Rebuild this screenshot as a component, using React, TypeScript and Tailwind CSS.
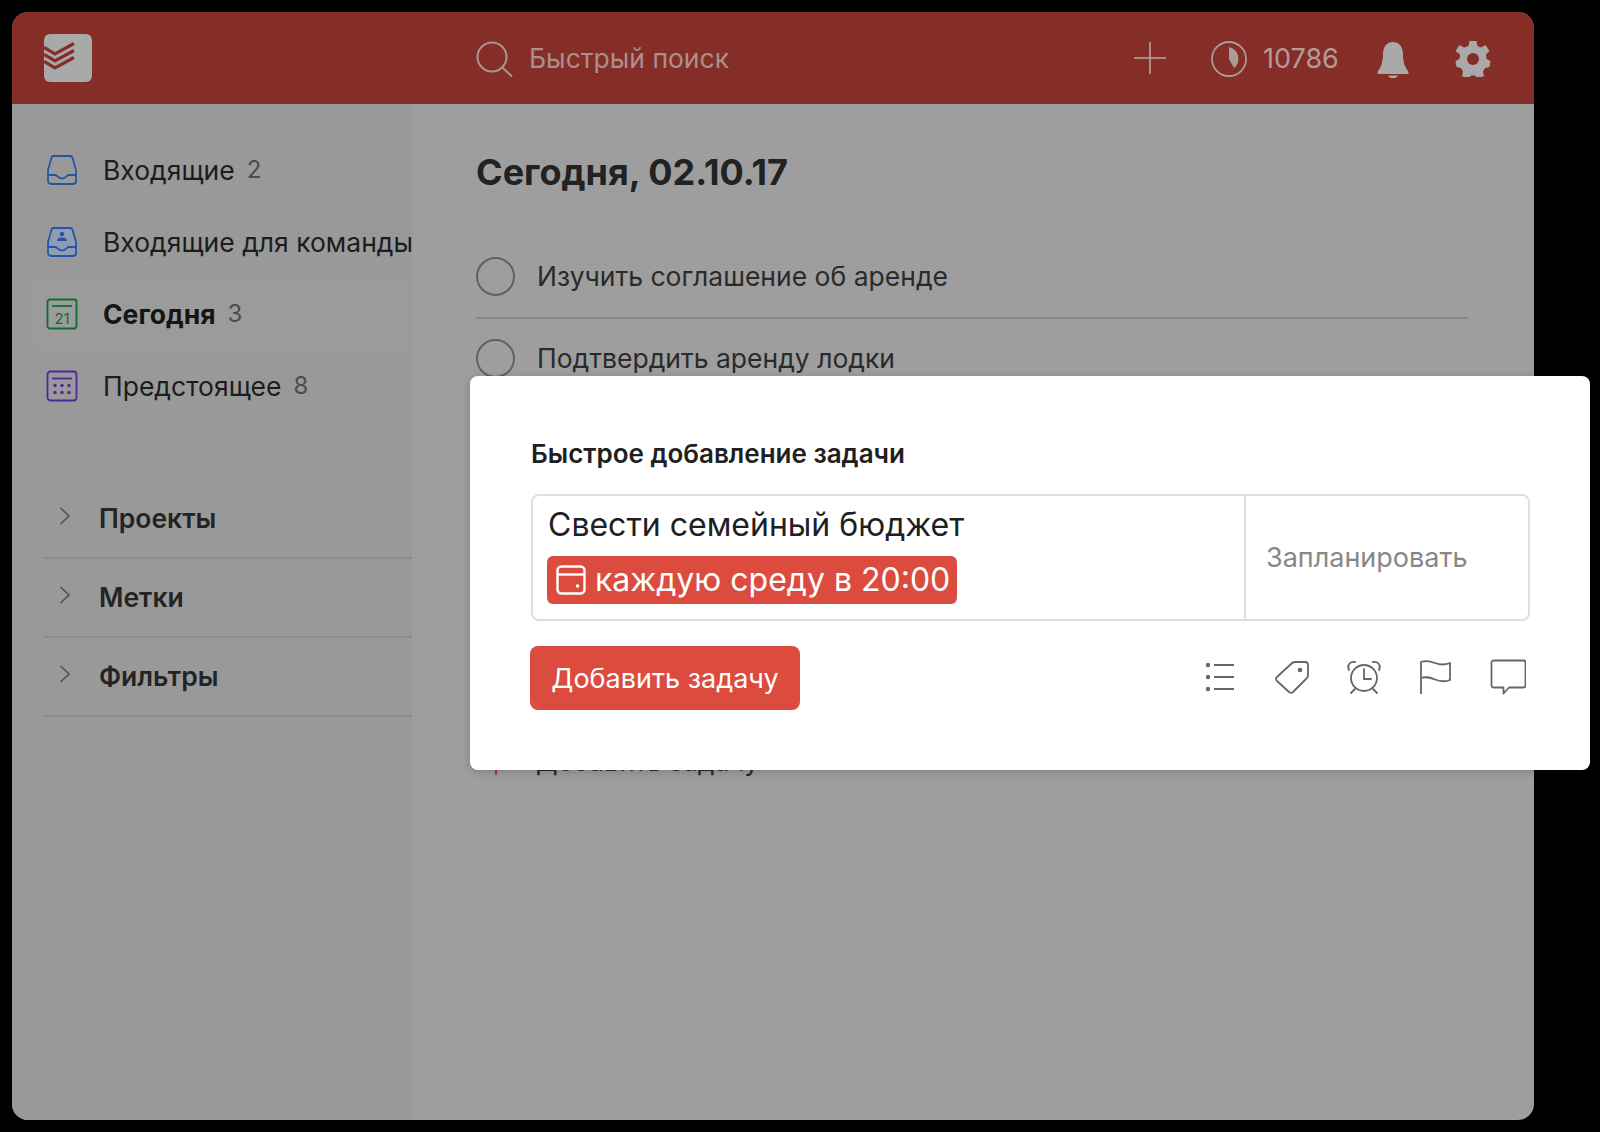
const FONT = "font-['Inter','Noto_Sans',sans-serif]";

function Logo() {
  return (
    <div className="relative w-12 h-12 rounded-md bg-[#a9a9a9] overflow-hidden shrink-0">
      <svg viewBox="0 0 48 48" className="w-12 h-12" fill="none" stroke="#852e28" strokeWidth="3.2">
        <path d="M0 13.5 L11 20 L30 9.5" />
        <path d="M0 20.5 L11 27 L30 16.5" />
        <path d="M0 27.5 L11 34 L30 23.5" />
      </svg>
    </div>
  );
}

function InboxIcon({ team }: { team?: boolean }) {
  return (
    <svg viewBox="0 0 32 32" className="w-8 h-8 shrink-0" fill="none" stroke="#2456a8" strokeWidth="1.8" strokeLinejoin="round">
      {team && <path d="M6 4h20l4 14v9a2 2 0 0 1-2 2H4a2 2 0 0 1-2-2v-9L6 4z" fill="#8f9cb4" stroke="none" />}
      <path d="M7.5 2h17a2 2 0 0 1 1.9 1.4L30 16v11a3 3 0 0 1-3 3H5a3 3 0 0 1-3-3V16L5.6 3.4A2 2 0 0 1 7.5 2z" />
      <path d="M2 21h7.5c2 0 2.5 3.5 6.5 3.5s4.500-3.500 6.500-3.500H30" />
      {team && <circle cx="16" cy="8" r="2.2" fill="#2456a8" stroke="none" />}
      {team && <path d="M11 15c0-2.500 2-3.500 5-3.500s5 1 5 3.500z" fill="#2456a8" stroke="none" />}
    </svg>
  );
}

function TodayIcon() {
  return (
    <svg viewBox="0 0 32 32" className="w-8 h-8 shrink-0" fill="none" stroke="#0f6b35" strokeWidth="1.8">
      <rect x="1.500" y="1.500" width="29" height="29" rx="2.500" />
      <path d="M6 8h20" />
      <text x="16" y="25.500" textAnchor="middle" fontSize="15" fontFamily="Inter" fill="#0f6b35" stroke="none">21</text>
    </svg>
  );
}

function UpcomingIcon() {
  return (
    <svg viewBox="0 0 32 32" className="w-8 h-8 shrink-0" fill="none" stroke="#4a2a96" strokeWidth="1.8">
      <rect x="1.500" y="1.500" width="29" height="29" rx="3" />
      <path d="M6 8.500h20" />
      {[9, 16, 23].map((x) => (
        <g key={x} fill="#4a2a96" stroke="none">
          <circle cx={x} cy="15.500" r="1.700" />
          <circle cx={x} cy="22.500" r="1.700" />
        </g>
      ))}
    </svg>
  );
}

function NavRow({ icon, label, count, active }: { icon: React.ReactNode; label: string; count?: string; active?: boolean }) {
  return (
    <div className={`h-[72px] flex items-center pl-3 overflow-hidden whitespace-nowrap ${active ? "bg-[#9b9b9b]" : ""}`}>
      {icon}
      <span className={`ml-[25px] text-[26.500px] leading-none ${active ? "font-bold text-[#151515]" : "text-[#1c1c1c]"}`}>{label}</span>
      {count && <span className="ml-3 text-[24px] leading-none text-[#4c4c4c]">{count}</span>}
    </div>
  );
}

function Section({ label }: { label: string }) {
  return (
    <div className="h-20 border-b-2 border-[#8d8d8d] ml-[32px] flex items-center -mt-px">
      <svg viewBox="0 0 12 20" className="w-3 h-5 ml-[15px] mb-1 shrink-0" fill="none" stroke="#505050" strokeWidth="1.600">
        <path d="M1.500 2 L10 10 L1.500 18" />
      </svg>
      <span className="ml-[28px] text-[26.500px] leading-none font-semibold text-[#242424]">{label}</span>
    </div>
  );
}

function Circle() {
  return <span className="w-[39px] h-[39px] rounded-full border-2 border-[#606060] shrink-0" />;
}

const ICON = "w-9 h-9 shrink-0";

function App() {
  return (
    <div className={`${FONT} relative h-[1132px] bg-black p-3 overflow-hidden`}>
      <div className="h-[1108px] w-[1522px] rounded-2xl overflow-hidden bg-[#9e9e9e] flex flex-col">
        <header className="h-[92px] bg-[#852e28] flex items-center shrink-0 pl-8">
          <Logo />
          <svg viewBox="0 0 38 38" className="w-[38px] h-[38px] ml-[384px] mt-1" fill="none" stroke="#ab9490" strokeWidth="2">
            <circle cx="16" cy="16" r="14.500" />
            <path d="M26.500 26.500 L36 35.500" />
          </svg>
          <span className="ml-[15px] text-[26.500px] leading-none text-[#ab8f8b]">Быстрый поиск</span>
          <svg viewBox="0 0 32 32" className="w-8 h-8 ml-[405px]" fill="none" stroke="#b8a5a2" strokeWidth="1.600">
            <path d="M16 0v32M0 16h32" />
          </svg>
          <svg viewBox="0 0 36 36" className="w-9 h-9 ml-[45px] mt-0.5" fill="none">
            <circle cx="18" cy="18" r="17" stroke="#ab9c99" strokeWidth="1.800" />
            <path d="M18 6 A12 12 0 0 1 23 27 L18 18 Z" fill="#ab9c99" />
          </svg>
          <span className="ml-4 text-[27px] leading-none text-[#b39c98]">10786</span>
          <svg viewBox="0 0 32 36" className="w-8 h-9 ml-[38px] mt-1" fill="#a9a9a9">
            <path d="M16 0c-7 0-10 6-10 12 0 8-2 13-5 17-1 1-1 3 1 3h28c2 0 2-2 1-3-3-4-5-9-5-17 0-6-3-12-10-12z" />
            <path d="M11 33.500h10c-1 2-3 3-5 3s-4-1-5-3z" />
          </svg>
          <svg viewBox="0 0 36 36" className="w-9 h-9 ml-[46px] mt-0.5" fill="#a9a9a9">
            <path fillRule="evenodd" d="M14.500 0h7l1 5 3.500 1.500 4.500-2.500 4 6-3.500 3.500.5 4.500 4 2v0l-1 6-4.500 1-2 3.500 1 4.500-6 3-3-3.500h-4l-3 3.500-6-3 1-4.500-2-3.500-4.500-1-1-6 4-2 .5-4.500L.5 10l4-6L9 6.500 13.500 5l1-5zM18 12a6 6 0 1 0 0 12 6 6 0 0 0 0-12z" />
          </svg>
        </header>
        <div className="flex flex-1 min-h-0">
          <aside className="w-[400px] shrink-0 bg-[#999999] pt-[30px] overflow-hidden">
            <div className="ml-[22px]">
              <NavRow icon={<InboxIcon />} label="Входящие" count="2" />
              <NavRow icon={<InboxIcon team />} label="Входящие для команды" />
              <NavRow icon={<TodayIcon />} label="Сегодня" count="3" active />
              <NavRow icon={<UpcomingIcon />} label="Предстоящее" count="8" />
            </div>
            <div className="mt-[58px]">
              <Section label="Проекты" />
              <Section label="Метки" />
              <Section label="Фильтры" />
            </div>
          </aside>
          <main className="flex-1 pl-[64px] pr-[66px] pt-[43px] text-[#2a2a2a]">
            <h1 className="text-[36px] leading-[50px] font-bold text-[#222222]">Сегодня, 02.10.17</h1>
            <div className="mt-[41px] h-[81px] border-b-2 border-[#858585] flex items-center pb-[2px]">
              <Circle />
              <span className="ml-[22px] text-[26.500px] leading-none">Изучить соглашение об аренде</span>
            </div>
            <div className="h-[81px] flex items-center pb-[2px]">
              <Circle />
              <span className="ml-[22px] text-[26.500px] leading-none">Подтвердить аренду лодки</span>
            </div>
            <div className="mt-[343px] h-9 flex items-center">
              <svg viewBox="0 0 30 30" className="w-[30px] h-[30px] ml-[5px]" fill="none" stroke="#a5271c" strokeWidth="1.600">
                <path d="M15 1v28M1 15h28" />
              </svg>
              <span className="ml-[25px] text-[26.500px] leading-none">Добавить задачу</span>
            </div>
          </main>
        </div>
      </div>

      <div className="absolute left-[470px] top-[376px] w-[1120px] h-[394px] bg-white rounded-lg shadow-[0_2px_8px_rgba(0,0,0,0.2)] pt-[60px] pl-[61px] pr-[60px]">
        <h2 className="text-[26px] leading-9 font-semibold text-[#202020]">Быстрое добавление задачи</h2>
        <div className="mt-[22px] h-[127px] w-[999px] border-2 border-[#dedede] rounded-lg flex">
          <div className="w-[713px] border-r-2 border-[#dedede] pl-[14px] pt-[10px]">
            <div className="text-[32px] leading-[38px] text-[#202020] pl-px">Свести семейный бюджет</div>
            <div className="mt-[12px] h-12 w-[410px] bg-[#db4c3f] rounded-md flex items-center pl-[9px] text-white">
              <svg viewBox="0 0 30 30" className="w-[30px] h-[30px] shrink-0" fill="none" stroke="#ffffff" strokeWidth="2.400">
                <rect x="1.500" y="1.500" width="27" height="27" rx="4" />
                <path d="M2 9.500h26" />
                <circle cx="21.500" cy="21" r="1.800" fill="#ffffff" stroke="none" />
              </svg>
              <span className="ml-[9px] text-[32px] leading-none whitespace-nowrap">каждую среду в 20:00</span>
            </div>
          </div>
          <div className="flex-1 flex items-center pl-[20px] text-[27px] leading-none text-[#878787]">Запланировать</div>
        </div>
        <div className="mt-[25px] flex items-start justify-between">
          <button className="w-[270px] h-[64px] -ml-px rounded-lg bg-[#db4c3f] text-white text-[27px] leading-none">Добавить задачу</button>
          <div className="flex items-center gap-[36px] pr-1 pt-[13px]">
            <svg viewBox="0 0 36 36" className={ICON} fill="none" stroke="#666666" strokeWidth="1.800">
              <path d="M12 6h20M12 18h20M12 30h20" />
              <g fill="#666666" stroke="none"><circle cx="6" cy="6" r="2.200" /><circle cx="6" cy="18" r="2.200" /><circle cx="6" cy="30" r="2.200" /></g>
            </svg>
            <svg viewBox="0 0 36 36" className={ICON} fill="none" stroke="#666666" strokeWidth="1.800" strokeLinejoin="round">
              <path d="M21 3h10a3 3 0 0 1 3 3v10c0 2-.5 3-2 4L19 33a3 3 0 0 1-4 0L3 22a2.500 2.500 0 0 1 0-4L17 5c1.500-1.500 2.500-2 4-2z" />
              <circle cx="26" cy="11" r="2.300" fill="#666666" stroke="none" />
            </svg>
            <svg viewBox="0 0 36 36" className={ICON} fill="none" stroke="#666666" strokeWidth="1.800" strokeLinecap="round">
              <circle cx="18" cy="19" r="13" />
              <path d="M18 10v10h7" />
              <path d="M3 11C1 7 3 2 9 3M33 11c2-4 0-9-6-8M9 30l-4 4M27 30l4 4" />
            </svg>
            <svg viewBox="0 0 36 36" className={ICON} fill="none" stroke="#666666" strokeWidth="1.800">
              <path d="M3 35V3c5-2 9-1 14 1s10 2 15 0v17c-5 2-10 1.500-15-.5S8 17 3 19" />
            </svg>
            <svg viewBox="0 0 36 36" className={ICON} fill="none" stroke="#666666" strokeWidth="1.800" strokeLinejoin="round">
              <path d="M3.500 1.500h30a2 2 0 0 1 2 2v23a2 2 0 0 1-2 2H19l-5.500 6V28.500H3.500a2 2 0 0 1-2-2v-23a2 2 0 0 1 2-2z" />
            </svg>
          </div>
        </div>
      </div>
    </div>
  );
}

export default App;
